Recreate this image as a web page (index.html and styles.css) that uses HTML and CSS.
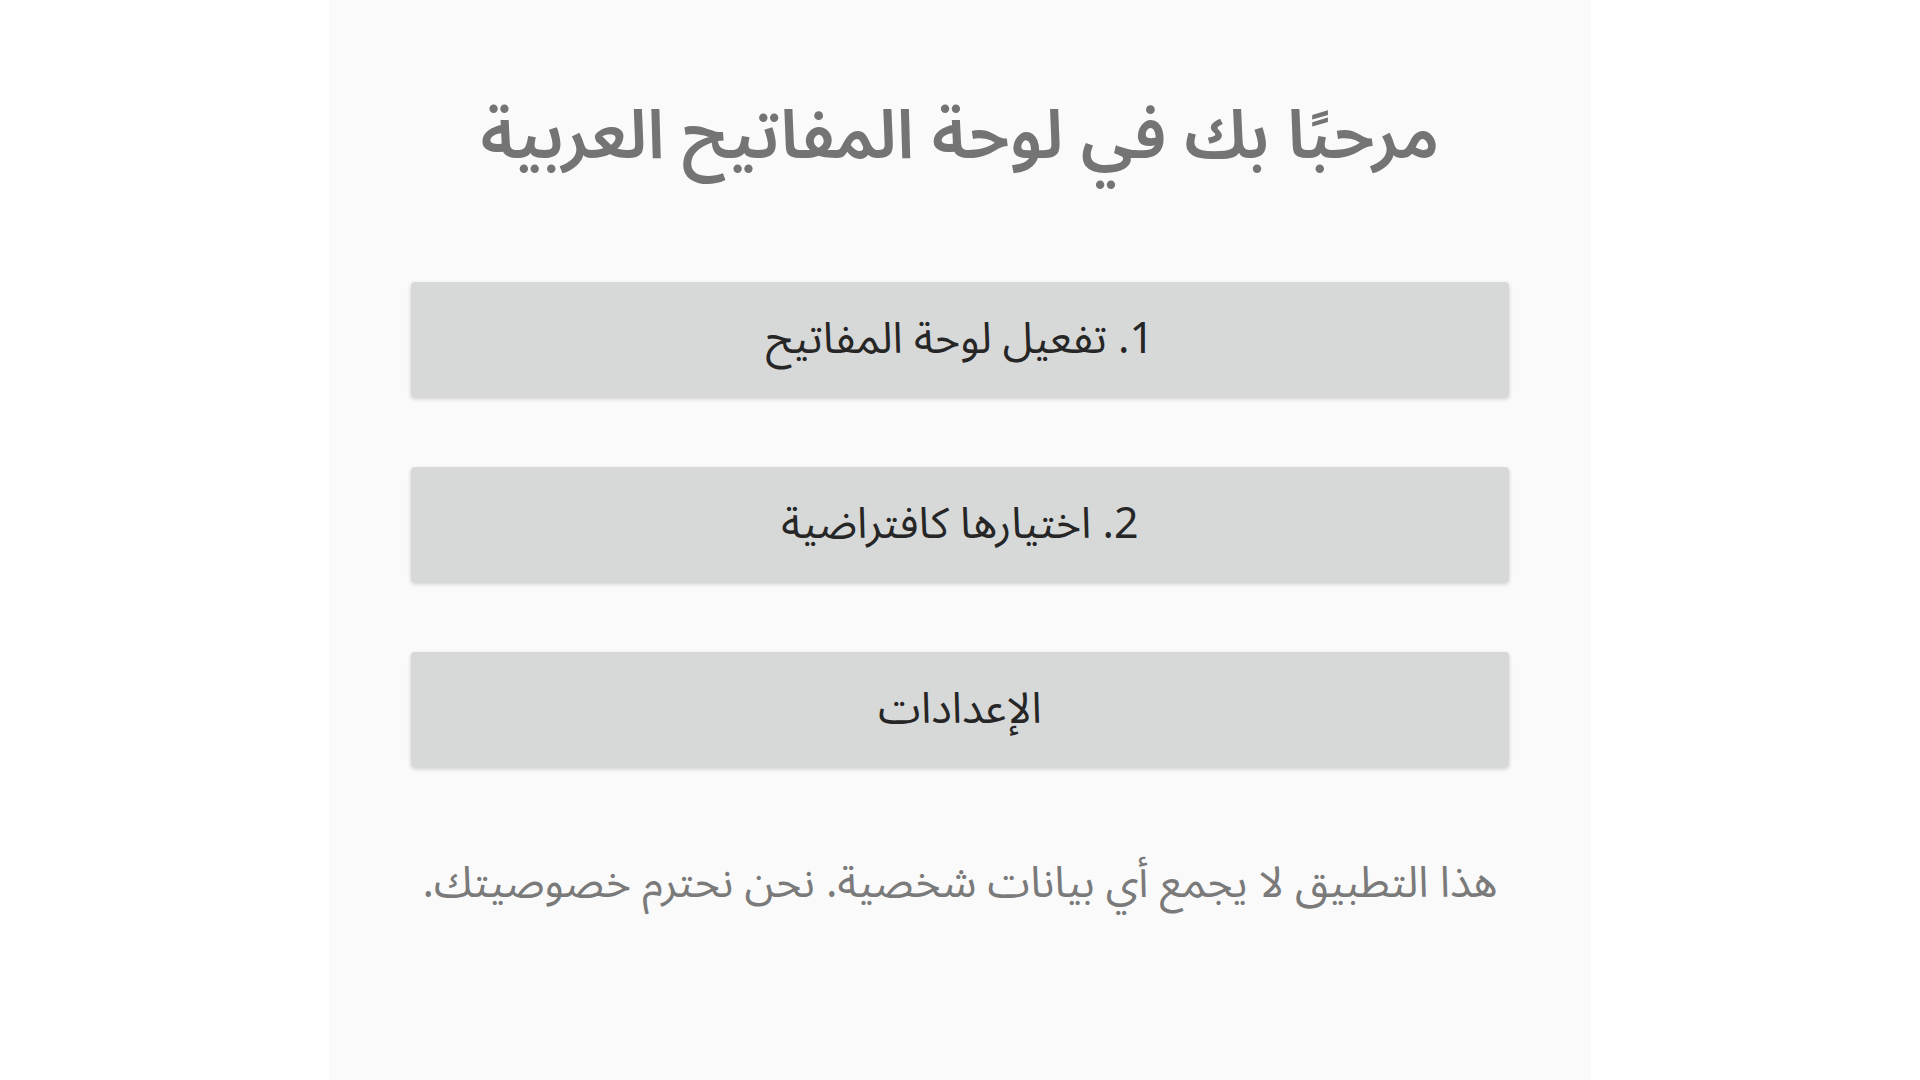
FILE: index.html
```html
<!DOCTYPE html>
<html lang="ar" dir="rtl">
<head>
    <meta charset="UTF-8">
    <meta name="viewport" content="width=device-width, initial-scale=1.0">
    <title>لوحة المفاتيح العربية</title>
    <link rel="stylesheet" href="styles.css">
</head>
<body>
    <div class="screen">
        <h1 class="title">مرحبًا بك في لوحة المفاتيح العربية</h1>

        <div class="actions">
            <button class="step-btn">1. تفعيل لوحة المفاتيح</button>
            <button class="step-btn">2. اختيارها كافتراضية</button>
            <button class="step-btn">الإعدادات</button>
        </div>

        <p class="privacy">هذا التطبيق لا يجمع أي بيانات شخصية. نحن نحترم خصوصيتك.</p>
    </div>
</body>
</html>
```

FILE: styles.css
```css
body {
    margin: 0;
    background-color: #ffffff;
    font-family: "Noto Sans Arabic", "Noto Sans", "DejaVu Sans", sans-serif;
}
.screen {
    width: 1262px;
    min-height: 100vh;
    margin: 0 auto;
    padding: 88px 82px 0;
    box-sizing: border-box;
    background-color: #fafafa;
}
.title {
    margin: 0;
    font-size: 68px;
    line-height: 98px;
    font-weight: 600;
    color: #747474;
    text-align: center;
}
.actions {
    display: flex;
    flex-direction: column;
    gap: 70px;
    margin-top: 96px;
}
.step-btn {
    height: 115px;
    padding: 0;
    border: none;
    border-radius: 4px;
    background-color: #d7d8d8;
    color: #262626;
    font-family: inherit;
    font-size: 43px;
    box-shadow: 0 2px 4px rgba(0, 0, 0, 0.18);
    cursor: pointer;
}
.privacy {
    margin: 87px 0 0;
    font-size: 43px;
    line-height: 60px;
    color: #7a7a7a;
    text-align: center;
}
```
